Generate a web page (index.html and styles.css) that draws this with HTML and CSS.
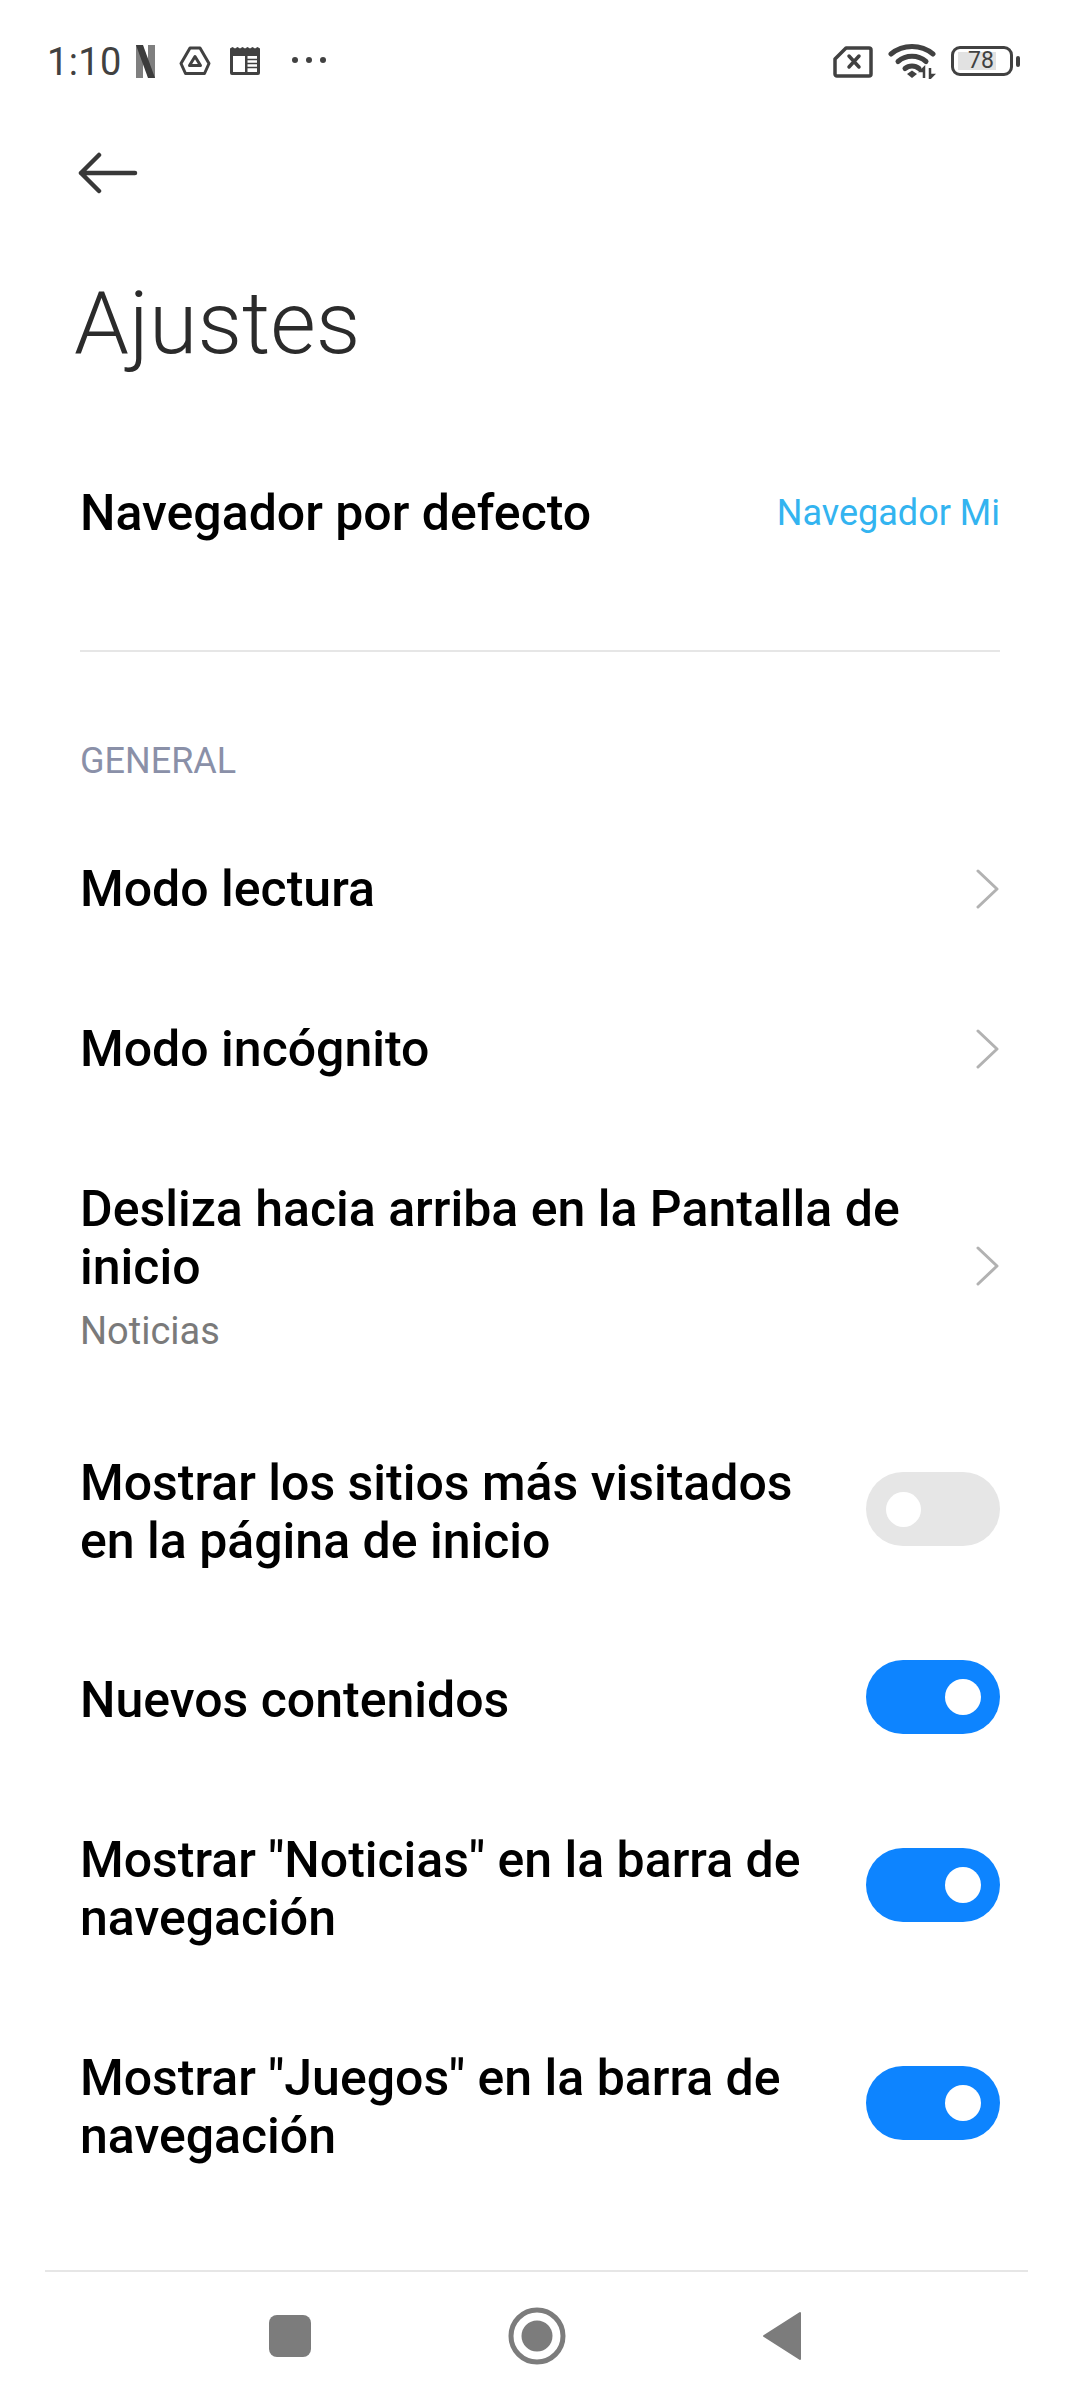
FILE: index.html
```html
<!DOCTYPE html>
<html lang="es">
<head>
<meta charset="utf-8">
<title>Ajustes</title>
<link rel="stylesheet" href="styles.css">
</head>
<body>
<div class="screen">
  <header class="status">
    <div class="status-left">
      <span class="time">1:10</span>
      <svg class="ic-n" width="19" height="33" viewBox="0 0 19 33"><rect x="0" y="0" width="7" height="33" fill="#7f7f7f"/><rect x="12" y="0" width="7" height="33" fill="#7f7f7f"/><path d="M0 0H7L19 33H12Z" fill="#3c3c3c"/></svg>
      <svg class="ic-drive" width="32" height="30" viewBox="0 0 32 30"><path d="M11 2H21L30 17.500 25.500 27.500H6.500L2 17.500Z" fill="none" stroke="#414141" stroke-width="3" stroke-linejoin="round"/><path d="M16 10.500L21.500 19.500H10.500Z" fill="none" stroke="#414141" stroke-width="3" stroke-linejoin="round"/></svg>
      <svg class="ic-news" width="30" height="28" viewBox="0 0 30 28"><path d="M0 1.500L2.500 0 5 1.500 7.500 0 10 1.500 12.500 0 15 1.500 17.500 0 20 1.500 22.500 0 25 1.500 27.500 0 30 1.500V26a2 2 0 0 1-2 2H2a2 2 0 0 1-2-2Z" fill="#414141"/><rect x="3" y="9" width="24" height="16" fill="#fff"/><rect x="3" y="7" width="24" height="2" fill="#414141"/><rect x="15" y="9" width="2.500" height="16" fill="#414141"/><path d="M17 12.500H27M17 16.500H27M17 20.500H27" stroke="#414141" stroke-width="1.600"/></svg>
      <svg class="ic-dots" width="34" height="8" viewBox="0 0 34 8"><circle cx="3" cy="4" r="3" fill="#414141"/><circle cx="17" cy="4" r="3" fill="#414141"/><circle cx="31" cy="4" r="3" fill="#414141"/></svg>
    </div>
    <div class="status-right">
      <svg class="ic-sim" width="40" height="32" viewBox="0 0 40 32"><path d="M13 2H36a2 2 0 0 1 2 2V28a2 2 0 0 1-2 2H4a2 2 0 0 1-2-2V13Z" fill="none" stroke="#414141" stroke-width="3.500" stroke-linejoin="round"/><path d="M16 10L26 21M26 10L16 21" stroke="#414141" stroke-width="3.500" stroke-linecap="round"/></svg>
      <svg class="ic-wifi" width="48" height="36" viewBox="0 0 48 36"><path d="M3 11C15 1 33 1 45 11" fill="none" stroke="#414141" stroke-width="5" stroke-linecap="round"/><path d="M10 18.500C18 11.500 30 11.500 38 18.500" fill="none" stroke="#414141" stroke-width="5" stroke-linecap="round"/><path d="M17 25.500C21 22 27 22 31 25.500" fill="none" stroke="#414141" stroke-width="5" stroke-linecap="round"/><path d="M19 31L24 27.500 29 31 24 35Z" fill="#414141"/><path d="M36 25V35M33 28L36 25 36 28ZM42 25V35M42 35L45 32H42Z" stroke="#414141" stroke-width="2.500" fill="#414141"/></svg>
      <div class="battery">
        <div class="battery-body"><span class="battery-fill"></span><span class="battery-num">78</span></div>
        <span class="battery-cap"></span>
      </div>
    </div>
  </header>

  <div class="toolbar">
    <svg width="60" height="42" viewBox="0 0 60 42"><path d="M3 21H57M21 3L3 21 21 39" fill="none" stroke="#383838" stroke-width="4.500" stroke-linecap="round" stroke-linejoin="round"/></svg>
  </div>

  <h1 class="title">Ajustes</h1>

  <main class="content">
    <div class="row row-default">
      <span class="label">Navegador por defecto</span>
      <span class="value">Navegador Mi</span>
    </div>
    <hr class="divider">
    <div class="section">GENERAL</div>

    <div class="row">
      <span class="label">Modo lectura</span>
      <svg class="chevron" width="24" height="40" viewBox="0 0 24 40"><path d="M2 2L21 20 2 38" fill="none" stroke="#b2b2b2" stroke-width="3" stroke-linecap="round" stroke-linejoin="round"/></svg>
    </div>
    <div class="row">
      <span class="label">Modo incógnito</span>
      <svg class="chevron" width="24" height="40" viewBox="0 0 24 40"><path d="M2 2L21 20 2 38" fill="none" stroke="#b2b2b2" stroke-width="3" stroke-linecap="round" stroke-linejoin="round"/></svg>
    </div>
    <div class="row row-sub">
      <div class="text">
        <div class="label">Desliza hacia arriba en la Pantalla de inicio</div>
        <div class="sub">Noticias</div>
      </div>
      <svg class="chevron chevron-sub" width="24" height="40" viewBox="0 0 24 40"><path d="M2 2L21 20 2 38" fill="none" stroke="#b2b2b2" stroke-width="3" stroke-linecap="round" stroke-linejoin="round"/></svg>
    </div>
    <div class="row row-compact">
      <div class="text text-toggle"><div class="label">Mostrar los sitios más visitados en la página de inicio</div></div>
      <span class="toggle"><span class="knob"></span></span>
    </div>
    <div class="row">
      <div class="text text-toggle"><div class="label">Nuevos contenidos</div></div>
      <span class="toggle toggle-on"><span class="knob"></span></span>
    </div>
    <div class="row">
      <div class="text text-toggle"><div class="label">Mostrar "Noticias" en la barra de navegación</div></div>
      <span class="toggle toggle-on toggle-high"><span class="knob"></span></span>
    </div>
    <div class="row">
      <div class="text text-toggle"><div class="label">Mostrar "Juegos" en la barra de navegación</div></div>
      <span class="toggle toggle-on toggle-high"><span class="knob"></span></span>
    </div>
  </main>

  <nav class="navbar">
    <svg width="42" height="42" viewBox="0 0 42 42"><rect x="0" y="0" width="42" height="42" rx="8" fill="#7c7c7c"/></svg>
    <svg width="58" height="58" viewBox="0 0 58 58"><circle cx="29" cy="29" r="26" fill="none" stroke="#7c7c7c" stroke-width="5"/><circle cx="29" cy="29" r="15.500" fill="#7c7c7c"/></svg>
    <svg width="40" height="50" viewBox="0 0 40 50"><path d="M38 2V48L2 25Z" fill="#7c7c7c" stroke="#7c7c7c" stroke-width="2" stroke-linejoin="round"/></svg>
  </nav>
</div>
</body>
</html>
```

FILE: styles.css
```css
* { box-sizing: border-box; }
html, body { margin: 0; padding: 0; background: #fff; }
.screen {
  width: 1080px;
  height: 2400px;
  display: flex;
  flex-direction: column;
  font-family: Roboto, "Noto Sans", sans-serif;
  color: #000;
  overflow: hidden;
}
.status {
  height: 110px;
  flex: none;
  padding: 41px 60px 0 47px;
  display: flex;
  justify-content: space-between;
  align-items: flex-start;
}
.status-left { display: flex; align-items: center; height: 40px; }
.time { font-size: 38px; line-height: 42px; padding-top: 2px; color: #414141; letter-spacing: 0.4px; width: 89px; }
.ic-drive { margin-left: 24px; }
.ic-news { margin-left: 19px; }
.ic-dots { margin-left: 32px; margin-top: -2px; }
.status-right { display: flex; align-items: center; height: 40px; }
.ic-sim { margin-top: 2px; }
.ic-wifi { margin-left: 15px; }
.battery { display: flex; align-items: center; gap: 3px; margin-left: 15px; }
.battery-body {
  position: relative;
  width: 62px;
  height: 30px;
  border: 3px solid #414141;
  border-radius: 9px;
}
.battery-fill { position: absolute; left: 4px; top: 3px; bottom: 3px; width: 38px; background: #e2e2e2; }
.battery-num {
  position: absolute;
  left: 14px;
  top: -1px;
  font-size: 23px;
  line-height: 26px;
  color: #414141;
}
.battery-cap { width: 4px; height: 11px; background: #414141; border-radius: 2px; }
.toolbar { height: 64px; flex: none; margin-top: 31px; padding-left: 78px; display: flex; align-items: center; }
.title {
  margin: 68px 0 0;
  padding-left: 74px;
  font-size: 88px;
  line-height: 100px;
  font-weight: 300;
  color: #2b2b2b;
}
.content { flex: 1; padding: 0 80px; }
.row {
  display: flex;
  align-items: center;
  justify-content: space-between;
  padding: 51px 0;
}
.row-default { padding-top: 111px; padding-bottom: 108px; }
.row-sub { padding-bottom: 48px; }
.row-compact { padding-bottom: 50px; }
.label { font-size: 50px; line-height: 58px; font-weight: 500; color: #000; }
.value { font-size: 36px; color: #33b4f0; }
.divider { margin: 0; border: 0; height: 2px; background: #e6e6e6; }
.section { margin-top: 89px; font-size: 36px; line-height: 40px; color: #8a90a8; margin-bottom: 28px; }
.text { width: 840px; }
.text-toggle { width: 760px; }
.sub { font-size: 38px; line-height: 48px; padding-top: 11px; color: #7a7a7a; }
.chevron { flex: none; }
.chevron-sub { margin-bottom: 4px; }
.toggle {
  flex: none;
  width: 134px;
  height: 74px;
  margin: -11px 0 -5px;
  border-radius: 37px;
  background: #e6e6e6;
  display: flex;
  align-items: center;
  padding-left: 20px;
}
.knob { width: 35px; height: 35px; border-radius: 50%; background: #fff; }
.toggle-on { background: #0d84ff; justify-content: flex-end; padding-left: 0; padding-right: 19px; }
.toggle-on .knob { width: 36px; height: 36px; }
.toggle-high { margin: -12px 0 -4px; }
.navbar {
  margin: 0 52px 0 45px;
  height: 130px;
  flex: none;
  border-top: 2px solid #e6e6e6;
  display: flex;
  align-items: center;
  padding: 0 226px 0 224px;
  justify-content: space-between;
}
```
